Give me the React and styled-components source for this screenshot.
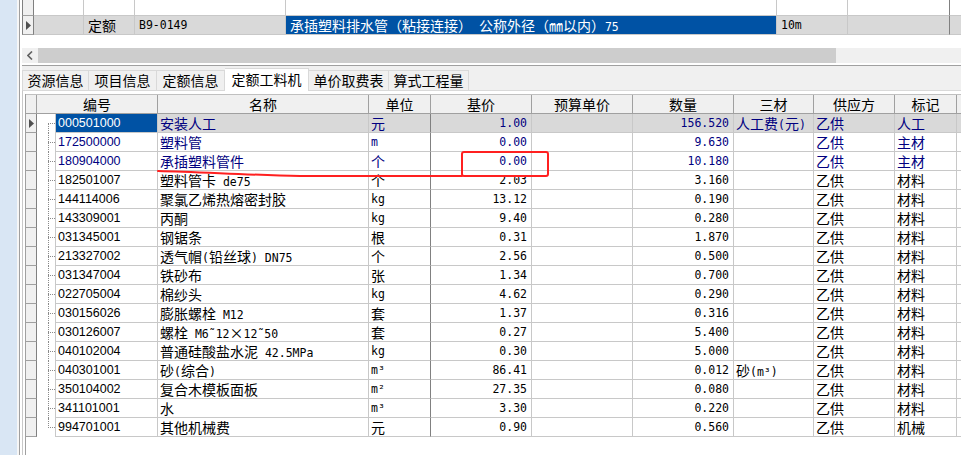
import React from 'react';
import styled, { createGlobalStyle } from 'styled-components';

const CJK = `"Noto Sans CJK SC", "Noto Sans", sans-serif`;
const MONO = `"DejaVu Sans Mono", "Liberation Mono", "Noto Sans CJK SC", monospace`;
const SANS = `"Liberation Sans", "Noto Sans CJK SC", sans-serif`;

const NAVY = '#000080';
const SEL = '#0052a4';
const CUR = '#d9d9d9';
const GRID = '#c8c8c8';
const DARK = '#808080';

const Global = createGlobalStyle`
  html, body { margin: 0; padding: 0; background: #fff; overflow: hidden; }
  body { font-family: ${CJK}; color: #000; }
  * { box-sizing: border-box; }
`;

const Screen = styled.div`
  position: relative;
  display: flex;
  width: 961px;
  height: 455px;
  overflow: hidden;
`;

const SideStrip = styled.div`
  flex: none;
  width: 19px;
  background: #d9e6f4;
  border-right: 2px solid #f6f6f6;
`;

const Window = styled.div`
  flex: 1;
  min-width: 0;
  display: flex;
  flex-direction: column;
  border-left: 1px solid #a0a0a0;
  padding-left: 2px;
  background: #fff;
`;

/* ---------- top grid ---------- */
const TopPanel = styled.div`
  flex: none;
  height: 66px;
  display: flex;
  flex-direction: column;
  border-bottom: 1px solid #a0a0a0;
`;

const TopRow = styled.div`
  display: grid;
  grid-template-columns: 12px 50px 51px 151px 491px 71px 102px 1fr;
  height: ${p => p.$h}px;
`;

const TopCell = styled.div`
  display: flex;
  align-items: center;
  padding-left: 4px;
  white-space: nowrap;
  border-bottom: 1px solid ${GRID};
  border-right: ${p => (p.$last ? 'none' : `1px solid ${p.$dark ? DARK : GRID}`)};
  background: ${p => p.$bg || '#fff'};
  color: ${p => p.$color || '#000'};
`;

const Indicator = styled.div`
  display: flex;
  align-items: center;
  justify-content: center;
  background: #f0f0f0;
  border-left: ${p => (p.$edge ? `1px solid ${DARK}` : 'none')};
  border-right: 1px solid ${DARK};
  border-bottom: 1px solid #a0a0a0;
`;

const Arrow = () => (
  <svg width="5" height="9" viewBox="0 0 5 9">
    <path d="M0 0 L5 4.5 L0 9 Z" fill="#505050" />
  </svg>
);

const HScroll = styled.div`
  display: flex;
  height: 15px;
  margin-top: auto;
  margin-bottom: 2px;
  background: #f0f0f0;
`;

const ScrollBtn = styled.div`
  width: 16px;
  display: flex;
  align-items: center;
  justify-content: center;
`;

const Thumb = styled.div`
  width: 798px;
  background: #cdcdcd;
`;

/* ---------- tabs ---------- */
const TabBar = styled.div`
  flex: none;
  height: 24px;
  display: flex;
  align-items: flex-end;
  background: #f0f0f0;
`;

const Tab = styled.div`
  width: ${p => p.$w}px;
  height: ${p => (p.$active ? 23 : 20)}px;
  margin-bottom: ${p => (p.$active ? -1 : 0)}px;
  position: relative;
  z-index: ${p => (p.$active ? 1 : 0)};
  display: flex;
  align-items: center;
  justify-content: center;
  border: 1px solid #d9d9d9;
  border-bottom: none;
  border-left: ${p => (p.$first ? '1px solid #d9d9d9' : 'none')};
  background: ${p => (p.$active ? '#fff' : '#f0f0f0')};
  font: 14px/17px ${CJK};
  color: #000;
  padding-bottom: ${p => (p.$active ? 2 : 0)}px;
`;

/* ---------- main table ---------- */
const Content = styled.div`
  flex: 1;
  display: flex;
  flex-direction: column;
  border-top: 1px solid #d9d9d9;
  border-left: 1px solid ${GRID};
  padding: 3px 0 0 2px;
  background: #fff;
`;

const TableArea = styled.div`
  flex: 1;
  display: flex;
  flex-direction: column;
  border-left: 1px solid #a0a0a0;
`;

const COLS = '11px 121px 211px 62px 101px 101px 101px 80px 81px 62px 1fr';

const HeaderRow = styled.div`
  display: grid;
  grid-template-columns: ${COLS};
  border-top: 1px solid #c0c0c0;
`;

const HeadCell = styled.div`
  height: 19px;
  display: flex;
  align-items: center;
  justify-content: center;
  background: #f0f0f0;
  border-right: ${p => (p.$last ? 'none' : '1px solid #a0a0a0')};
  border-bottom: 1px solid #a0a0a0;
  font: 14px/17px ${CJK};
`;

const Row = styled.div`
  display: grid;
  grid-template-columns: ${COLS};
  height: 19px;
`;

const Cell = styled.div`
  display: flex;
  align-items: center;
  justify-content: ${p => (p.$right ? 'flex-end' : 'flex-start')};
  padding: ${p => (p.$right ? '0 4px 0 0' : '0 0 0 2px')};
  white-space: nowrap;
  border-bottom: 1px solid ${GRID};
  border-right: ${p => (p.$last ? 'none' : `1px solid ${p.$dark ? DARK : GRID}`)};
  background: ${p => (p.$cur ? CUR : '#fff')};
  color: ${p => (p.$blue ? NAVY : '#000')};
`;

const CodeCell = styled.div`
  display: flex;
`;

const Gutter = styled.div`
  position: relative;
  width: 18px;
  flex: none;
  &::before {
    content: '';
    position: absolute;
    left: 11px;
    top: ${p => (p.$first ? '9px' : '0')};
    bottom: ${p => (p.$lastRow ? '9px' : '0')};
    border-left: 1px dotted #8a8a8a;
  }
  &::after {
    content: '';
    position: absolute;
    left: 11px;
    right: 0;
    top: 9px;
    border-top: 1px dotted #8a8a8a;
  }
`;

const CodeBox = styled.div`
  flex: 1;
  display: flex;
  align-items: center;
  padding-left: 2px;
  border-left: 1px solid ${GRID};
  border-right: 1px solid ${GRID};
  border-bottom: 1px solid ${GRID};
  background: ${p => (p.$sel ? SEL : '#fff')};
  color: ${p => (p.$sel ? '#fff' : p.$blue ? NAVY : '#000')};
  font: 12.5px/16px ${SANS};
`;

const TextRun = styled.span`
  display: inline-flex;
  align-items: baseline;
  height: 17px;
`;

const Han = styled.span`
  display: inline-block;
  font: 14px/17px ${CJK};
`;

const Latin = styled.span`
  display: inline-block;
  white-space: pre;
  font: 11.5px/17px ${MONO};
`;

const LATIN_RUN = /([\x20-\x7e˜³²]+)/;
const LATIN_ONLY = /^[\x20-\x7e˜³²]+$/;

function Txt({ children }) {
  if (!children) return null;
  const parts = String(children).split(LATIN_RUN).filter(Boolean);
  return (
    <TextRun>
      {parts.map((p, i) =>
        LATIN_ONLY.test(p) ? <Latin key={i}>{p}</Latin> : <Han key={i}>{p}</Han>
      )}
    </TextRun>
  );
}

const Annotation = styled.svg`
  position: absolute;
  left: 0;
  top: 0;
  pointer-events: none;
`;

const rows = [
  { code: '000501000', name: '安装人工', unit: '元', base: '1.00', qty: '156.520', sc: '人工费(元)', mark: '人工', blue: true, cur: true },
  { code: '172500000', name: '塑料管', unit: 'm', base: '0.00', qty: '9.630', mark: '主材', blue: true },
  { code: '180904000', name: '承插塑料管件', unit: '个', base: '0.00', qty: '10.180', mark: '主材', blue: true },
  { code: '182501007', name: '塑料管卡 de75', unit: '个', base: '2.03', qty: '3.160', mark: '材料' },
  { code: '144114006', name: '聚氯乙烯热熔密封胶', unit: 'kg', base: '13.12', qty: '0.190', mark: '材料' },
  { code: '143309001', name: '丙酮', unit: 'kg', base: '9.40', qty: '0.280', mark: '材料' },
  { code: '031345001', name: '钢锯条', unit: '根', base: '0.31', qty: '1.870', mark: '材料' },
  { code: '213327002', name: '透气帽(铅丝球) DN75', unit: '个', base: '2.56', qty: '0.500', mark: '材料' },
  { code: '031347004', name: '铁砂布', unit: '张', base: '1.34', qty: '0.700', mark: '材料' },
  { code: '022705004', name: '棉纱头', unit: 'kg', base: '4.62', qty: '0.290', mark: '材料' },
  { code: '030156026', name: '膨胀螺栓 M12', unit: '套', base: '1.37', qty: '0.316', mark: '材料' },
  { code: '030126007', name: '螺栓 M6˜12×12˜50', unit: '套', base: '0.27', qty: '5.400', mark: '材料' },
  { code: '040102004', name: '普通硅酸盐水泥 42.5MPa', unit: 'kg', base: '0.30', qty: '5.000', mark: '材料' },
  { code: '040301001', name: '砂(综合)', unit: 'm³', base: '86.41', qty: '0.012', sc: '砂(m³)', mark: '材料' },
  { code: '350104002', name: '复合木模板面板', unit: 'm²', base: '27.35', qty: '0.080', mark: '材料' },
  { code: '341101001', name: '水', unit: 'm³', base: '3.30', qty: '0.220', mark: '材料' },
  { code: '994701001', name: '其他机械费', unit: '元', base: '0.90', qty: '0.560', mark: '机械' },
];

const headers = ['编号', '名称', '单位', '基价', '预算单价', '数量', '三材', '供应方', '标记'];

const tabs = [
  { label: '资源信息', w: 67 },
  { label: '项目信息', w: 68 },
  { label: '定额信息', w: 68 },
  { label: '定额工料机', w: 84, active: true },
  { label: '单价取费表', w: 80 },
  { label: '算式工程量', w: 80 },
];

export default function App() {
  return (
    <>
      <Global />
      <Screen>
        <SideStrip />
        <Window>
          <TopPanel>
            <TopRow $h={16}>
              <Indicator $edge />
              <TopCell />
              <TopCell />
              <TopCell />
              <TopCell />
              <TopCell />
              <TopCell $dark />
              <TopCell $last />
            </TopRow>
            <TopRow $h={19}>
              <Indicator $edge><Arrow /></Indicator>
              <TopCell $bg={CUR} />
              <TopCell $bg={CUR}><Txt>定额</Txt></TopCell>
              <TopCell $bg={CUR}><Txt>B9-0149</Txt></TopCell>
              <TopCell $bg={SEL} $color="#fff"><Txt>承插塑料排水管（粘接连接） 公称外径（㎜以内）75</Txt></TopCell>
              <TopCell $bg={CUR}><Txt>10m</Txt></TopCell>
              <TopCell $bg={CUR} $dark />
              <TopCell $bg={CUR} $last />
            </TopRow>
            <HScroll>
              <ScrollBtn>
                <svg width="6" height="9" viewBox="0 0 6 9">
                  <path d="M5 0.5 L1 4.5 L5 8.5" fill="none" stroke="#606060" strokeWidth="1.6" />
                </svg>
              </ScrollBtn>
              <Thumb />
            </HScroll>
          </TopPanel>

          <TabBar>
            {tabs.map((t, i) => (
              <Tab key={t.label} $w={t.w} $active={t.active} $first={i === 0}>{t.label}</Tab>
            ))}
          </TabBar>

          <Content>
            <TableArea>
              <HeaderRow>
                <HeadCell />
                {headers.map(h => <HeadCell key={h}>{h}</HeadCell>)}
                <HeadCell $last />
              </HeaderRow>
              {rows.map((r, i) => (
                <Row key={r.code}>
                  <Indicator>{i === 0 ? <Arrow /> : null}</Indicator>
                  <CodeCell>
                    <Gutter $first={i === 0} $lastRow={i === rows.length - 1} />
                    <CodeBox $sel={i === 0} $blue={r.blue}>{r.code}</CodeBox>
                  </CodeCell>
                  <Cell $cur={r.cur} $blue={r.blue}><Txt>{r.name}</Txt></Cell>
                  <Cell $cur={r.cur} $blue={r.blue} $dark><Txt>{r.unit}</Txt></Cell>
                  <Cell $cur={r.cur} $blue={r.blue} $right><Txt>{r.base}</Txt></Cell>
                  <Cell $cur={r.cur} $blue={r.blue} />
                  <Cell $cur={r.cur} $blue={r.blue} $right><Txt>{r.qty}</Txt></Cell>
                  <Cell $cur={r.cur} $blue={r.blue}><Txt>{r.sc}</Txt></Cell>
                  <Cell $cur={r.cur} $blue={r.blue}><Txt>乙供</Txt></Cell>
                  <Cell $cur={r.cur} $blue={r.blue}><Txt>{r.mark}</Txt></Cell>
                  <Cell $cur={r.cur} $last />
                </Row>
              ))}
            </TableArea>
          </Content>
        </Window>

        <Annotation width="961" height="455" viewBox="0 0 961 455">
          <path
            d="M158 171 C 200 172, 250 175, 300 176 L 462 176"
            fill="none"
            stroke="#ff2020"
            strokeWidth="2"
            strokeLinecap="round"
          />
          <rect x="462" y="152" width="86" height="24" rx="2" fill="none" stroke="#ff2020" strokeWidth="2" />
        </Annotation>
      </Screen>
    </>
  );
}
